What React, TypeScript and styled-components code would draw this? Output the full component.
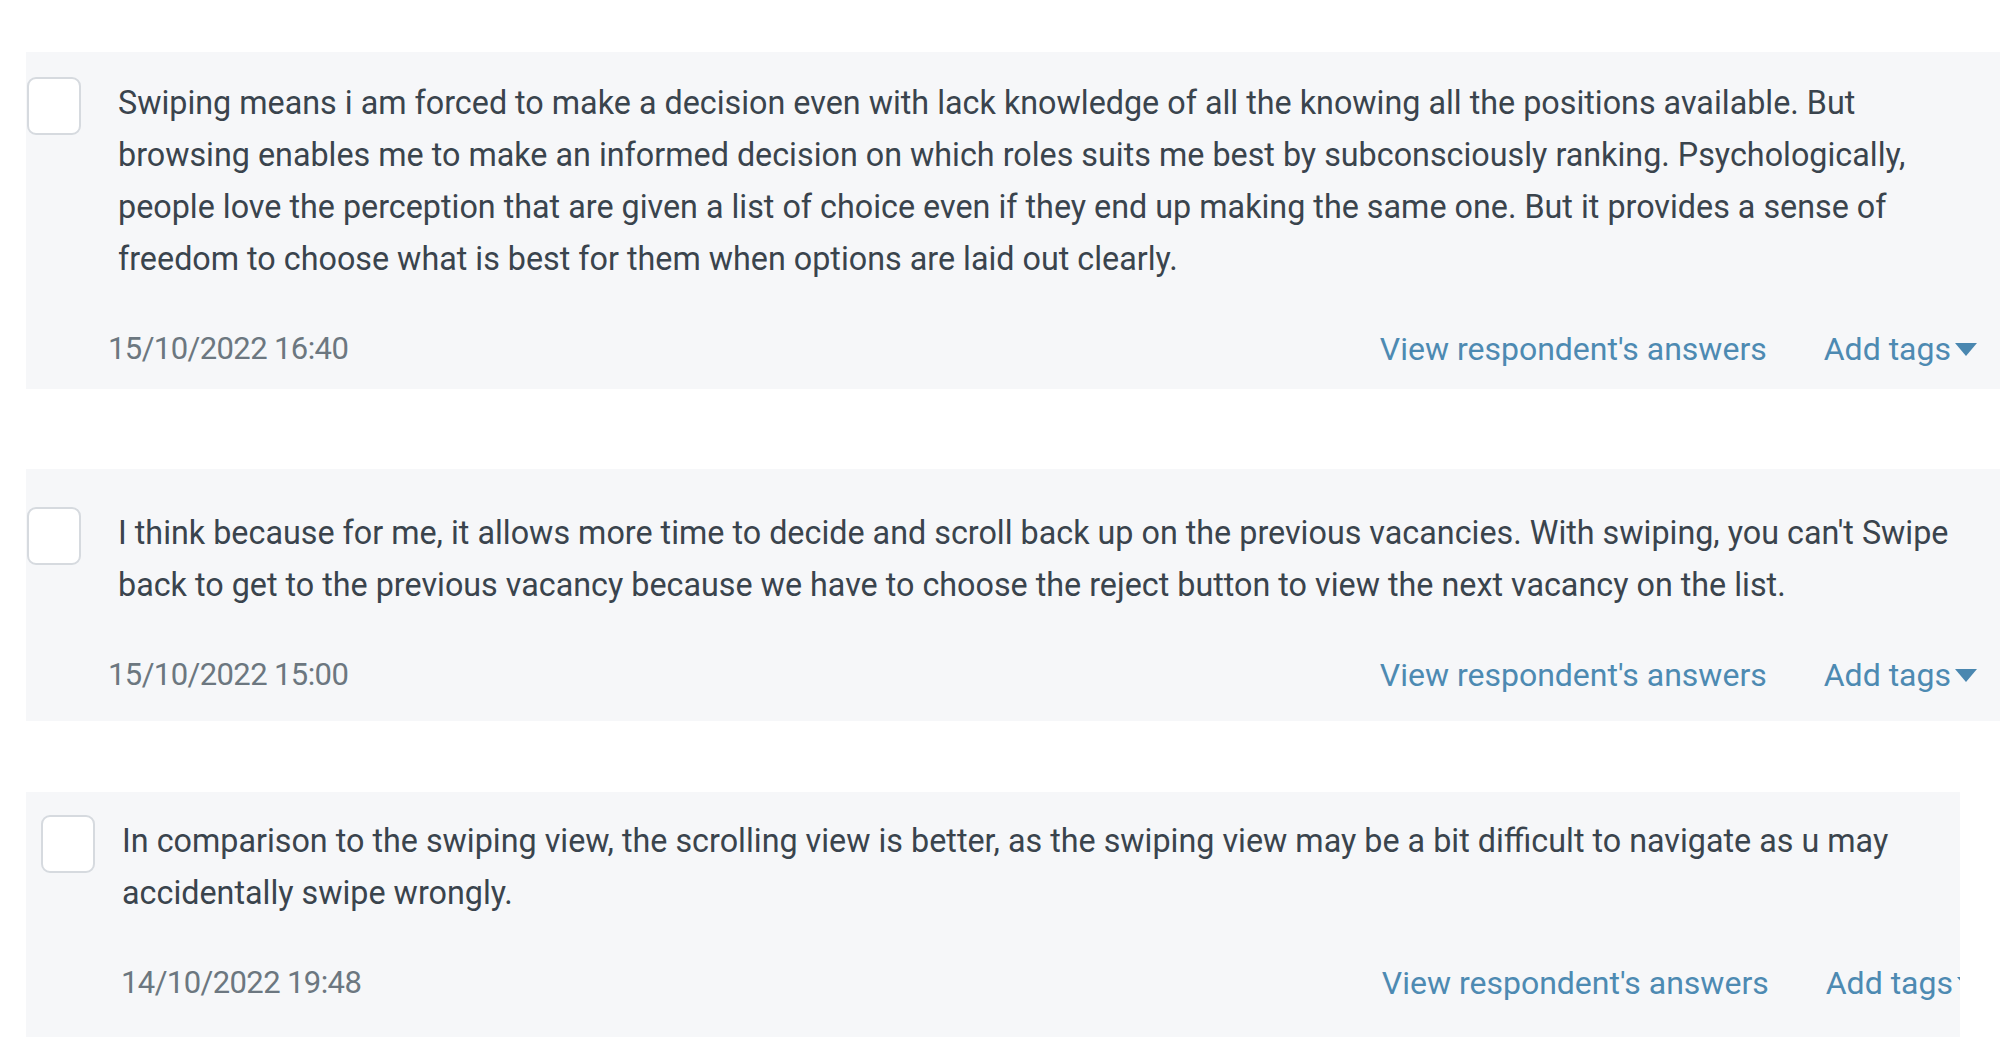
import React from "react";
import styled, { createGlobalStyle } from "styled-components";

const GlobalStyle = createGlobalStyle`
  html, body {
    margin: 0;
    padding: 0;
    background: #ffffff;
  }
  body {
    font-family: Roboto, "Liberation Sans", Arial, sans-serif;
    -webkit-font-smoothing: antialiased;
  }
`;

const List = styled.main`
  display: flex;
  flex-direction: column;
  align-items: flex-start;
  padding: 52px 0 0 26px;
`;

const Card = styled.section<{
  $width: number;
  $padTop: number;
  $padBottom: number;
  $gapAfter: number;
}>`
  width: ${(p) => p.$width}px;
  box-sizing: border-box;
  background: #f6f7f9;
  padding: ${(p) => p.$padTop}px 0 ${(p) => p.$padBottom}px;
  margin-bottom: ${(p) => p.$gapAfter}px;
  overflow: hidden;
  display: flex;
  flex-direction: column;
`;

const Top = styled.div<{ $indent: number; $gap: number }>`
  display: flex;
  align-items: flex-start;
  gap: ${(p) => p.$gap}px;
  padding-left: ${(p) => p.$indent}px;
`;

const Checkbox = styled.span`
  flex: none;
  width: 54px;
  height: 58px;
  box-sizing: border-box;
  border: 2px solid #d6dadf;
  border-radius: 9px;
  background: #ffffff;
`;

const Body = styled.p`
  margin: 0;
  font-size: 32.3px;
  line-height: 52px;
  color: #3a444d;
  white-space: nowrap;
`;

const Footer = styled.div<{ $indent: number; $overhang: number }>`
  display: flex;
  align-items: center;
  margin-top: 38px;
  padding-left: ${(p) => p.$indent}px;
  padding-right: 23px;
  margin-right: ${(p) => -p.$overhang}px;
`;

const Stamp = styled.span`
  flex: 1;
  font-size: 31px;
  letter-spacing: -0.6px;
  line-height: 52px;
  color: #6c7780;
`;

const Actions = styled.div`
  display: flex;
  align-items: center;
  gap: 57px;
`;

const Action = styled.a`
  display: inline-flex;
  align-items: center;
  gap: 4px;
  font-size: 32px;
  line-height: 52px;
  color: #4d8ab2;
  text-decoration: none;
  cursor: pointer;
  white-space: nowrap;
`;

const Caret = () => (
  <svg width="22" height="13" viewBox="0 0 22 13" aria-hidden="true">
    <polygon points="0,0 22,0 11,13" fill="#4a87b0" />
  </svg>
);

type Response = {
  lines: string[];
  date: string;
  width: number;
  padTop: number;
  padBottom: number;
  gapAfter: number;
  topIndent: number;
  textGap: number;
  footIndent: number;
  overhang: number;
};

const responses: Response[] = [
  {
    lines: [
      "Swiping means i am forced to make a decision even with lack knowledge of all the knowing all the positions available. But",
      "browsing enables me to make an informed decision on which roles suits me best by subconsciously ranking. Psychologically,",
      "people love the perception that are given a list of choice even if they end up making the same one. But it provides a sense of",
      "freedom to choose what is best for them when options are laid out clearly.",
    ],
    date: "15/10/2022 16:40",
    width: 1974,
    padTop: 25,
    padBottom: 14,
    gapAfter: 80,
    topIndent: 1,
    textGap: 37,
    footIndent: 82,
    overhang: 0,
  },
  {
    lines: [
      "I think because for me, it allows more time to decide and scroll back up on the previous vacancies. With swiping, you can't Swipe",
      "back to get to the previous vacancy because we have to choose the reject button to view the next vacancy on the list.",
    ],
    date: "15/10/2022 15:00",
    width: 1974,
    padTop: 38,
    padBottom: 20,
    gapAfter: 71,
    topIndent: 1,
    textGap: 37,
    footIndent: 82,
    overhang: 0,
  },
  {
    lines: [
      "In comparison to the swiping view, the scrolling view is better, as the swiping view may be a bit difficult to navigate as u may",
      "accidentally swipe wrongly.",
    ],
    date: "14/10/2022 19:48",
    width: 1934,
    padTop: 23,
    padBottom: 28,
    gapAfter: 0,
    topIndent: 15,
    textGap: 27,
    footIndent: 95,
    overhang: 42,
  },
];

export default function App() {
  return (
    <>
      <GlobalStyle />
      <List>
        {responses.map((r) => (
          <Card
            key={r.date}
            $width={r.width}
            $padTop={r.padTop}
            $padBottom={r.padBottom}
            $gapAfter={r.gapAfter}
          >
            <Top $indent={r.topIndent} $gap={r.textGap}>
              <Checkbox role="checkbox" aria-checked="false" />
              <Body>
                {r.lines.map((l, i) => (
                  <React.Fragment key={i}>
                    {l}
                    {i < r.lines.length - 1 && <br />}
                  </React.Fragment>
                ))}
              </Body>
            </Top>
            <Footer $indent={r.footIndent} $overhang={r.overhang}>
              <Stamp>{r.date}</Stamp>
              <Actions>
                <Action>View respondent's answers</Action>
                <Action>
                  Add tags
                  <Caret />
                </Action>
              </Actions>
            </Footer>
          </Card>
        ))}
      </List>
    </>
  );
}
